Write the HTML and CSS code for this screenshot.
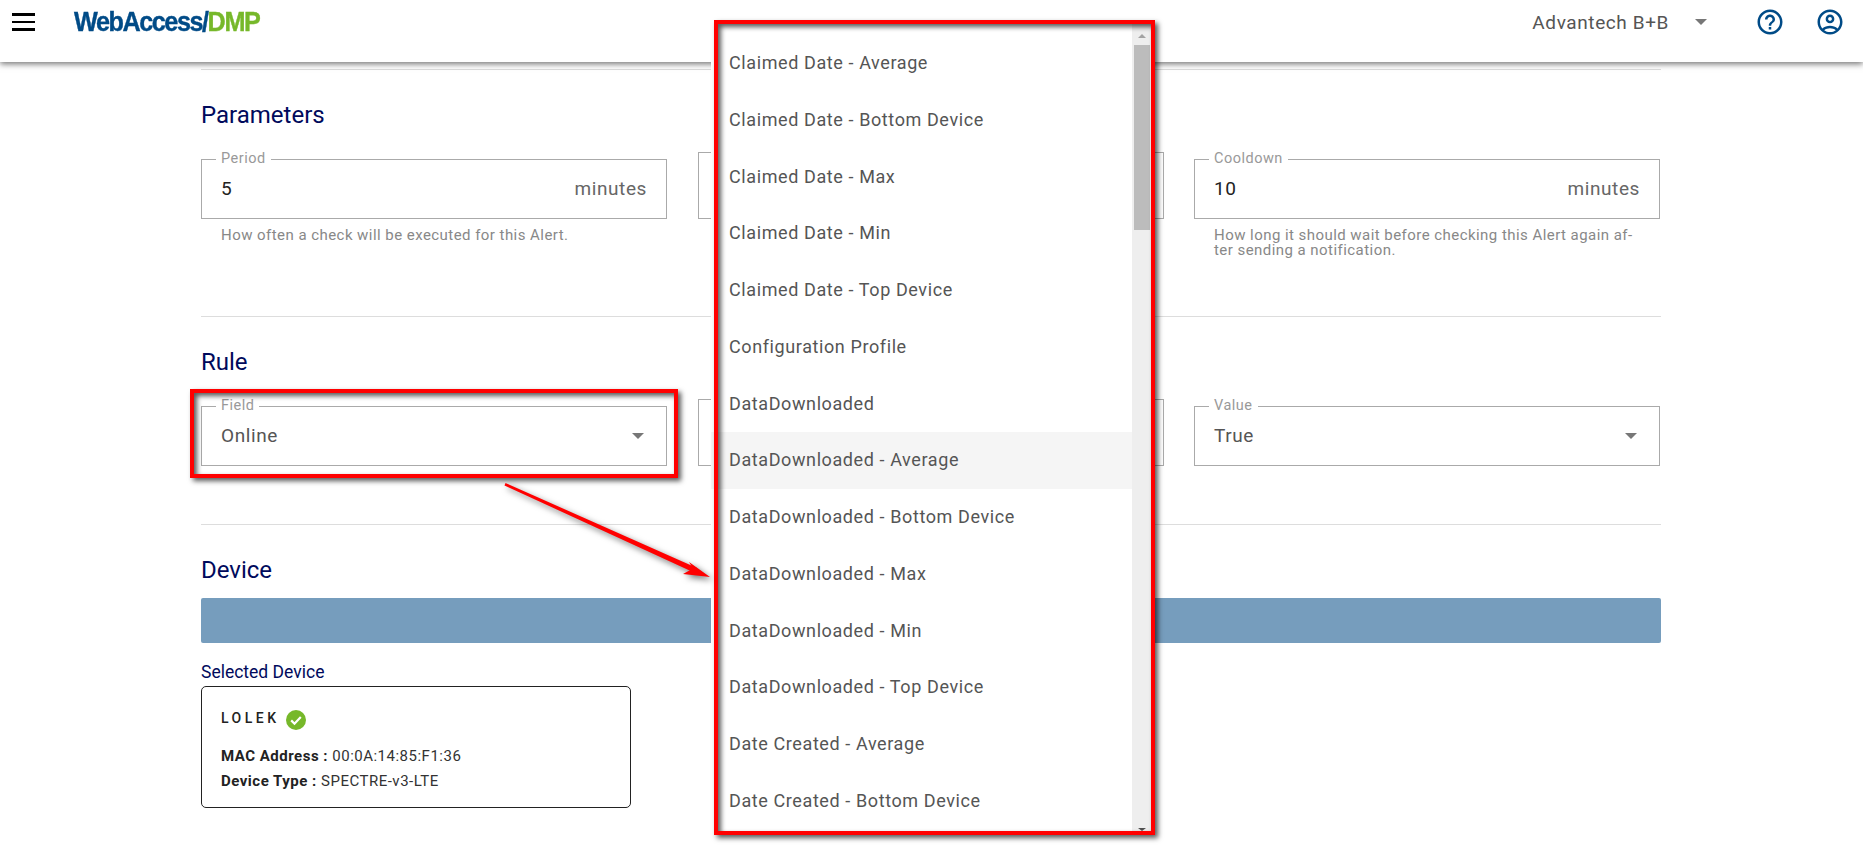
FILE: index.html
```html
<!DOCTYPE html>
<html lang="en">

<head>
	<meta charset="UTF-8">
	<title>WebAccess/DMP</title>
	<link rel="stylesheet" href="styles.css">
</head>

<body>
	<header class="topbar">
		<div class="burger"><span></span><span></span><span></span></div>
		<div class="logo">WebAccess/<span class="logo-dmp">DMP</span></div>
		<div class="org">Advantech B+B</div>
		<div class="caret org-caret"></div>
		<svg class="top-icon help-icon" viewBox="0 0 24 24"><path d="M11 18h2v-2h-2v2zm1-16C6.48 2 2 6.48 2 12s4.48 10 10 10 10-4.48 10-10S17.52 2 12 2zm0 18c-4.41 0-8-3.59-8-8s3.59-8 8-8 8 3.59 8 8-3.59 8-8 8zm0-14c-2.21 0-4 1.79-4 4h2c0-1.1.9-2 2-2s2 .9 2 2c0 2-3 1.75-3 5h2c0-2.25 3-2.5 3-5 0-2.21-1.79-4-4-4z"/></svg>
		<svg class="top-icon" viewBox="0 0 24 24"><path d="M12 2C6.48 2 2 6.48 2 12s4.48 10 10 10 10-4.48 10-10S17.52 2 12 2zM7.35 18.5C8.66 17.56 10.26 17 12 17s3.34.56 4.65 1.5c-1.31.94-2.91 1.5-4.65 1.5s-3.34-.56-4.65-1.5zm10.79-1.38C16.45 15.8 14.32 15 12 15s-4.45.8-6.14 2.12C4.7 15.73 4 13.95 4 12c0-4.42 3.58-8 8-8s8 3.58 8 8c0 1.95-.7 3.73-1.86 5.12zM12 6c-1.93 0-3.5 1.57-3.5 3.5S10.07 13 12 13s3.5-1.57 3.5-3.5S13.93 6 12 6zm0 5c-.83 0-1.5-.67-1.5-1.5S11.17 8 12 8s1.5.67 1.5 1.5S12.83 11 12 11z"/></svg>
	</header>

	<main class="content">
		<hr class="rule-line first-line">

		<h2 class="section-title">Parameters</h2>
		<div class="field-row params-row">
			<div>
				<fieldset class="field">
					<legend>Period</legend>
					<span class="value">5</span>
					<span class="unit">minutes</span>
				</fieldset>
				<p class="hint">How often a check will be executed for this Alert.</p>
			</div>
			<div>
				<fieldset class="field"></fieldset>
			</div>
			<div>
				<fieldset class="field">
					<legend>Cooldown</legend>
					<span class="value">10</span>
					<span class="unit">minutes</span>
				</fieldset>
				<p class="hint">How long it should wait before checking this Alert again af&shy;ter sending a notification.</p>
			</div>
		</div>

		<hr class="rule-line params-line">

		<h2 class="section-title rule-title">Rule</h2>
		<div class="field-row">
			<fieldset class="field">
				<legend>Field</legend>
				<span class="value select-value">Online</span>
				<span class="caret"></span>
			</fieldset>
			<fieldset class="field"></fieldset>
			<fieldset class="field">
				<legend>Value</legend>
				<span class="value select-value">True</span>
				<span class="caret"></span>
			</fieldset>
		</div>

		<hr class="rule-line rule-end-line">

		<h2 class="section-title device-title">Device</h2>
		<div class="device-bar"></div>

		<div class="selected-label">Selected Device</div>
		<div class="device-card">
			<div class="device-name">
				<span>LOLEK</span>
				<svg class="ok-icon" viewBox="0 0 20 20">
					<circle cx="10" cy="10" r="10" fill="#76b82a"/>
					<path d="M5.2 10.4l3.3 3.3 6.3-6.6" fill="none" stroke="#fff" stroke-width="2.2"/>
				</svg>
			</div>
			<div class="device-line first-device-line"><b>MAC Address :</b> 00:0A:14:85:F1:36</div>
			<div class="device-line"><b>Device Type :</b> SPECTRE-v3-LTE</div>
		</div>
	</main>

	<div class="menu">
		<ul class="menu-list">
			<li>Claimed Date - Average</li>
			<li>Claimed Date - Bottom Device</li>
			<li>Claimed Date - Max</li>
			<li>Claimed Date - Min</li>
			<li>Claimed Date - Top Device</li>
			<li>Configuration Profile</li>
			<li>DataDownloaded</li>
			<li class="hover">DataDownloaded - Average</li>
			<li>DataDownloaded - Bottom Device</li>
			<li>DataDownloaded - Max</li>
			<li>DataDownloaded - Min</li>
			<li>DataDownloaded - Top Device</li>
			<li>Date Created - Average</li>
			<li>Date Created - Bottom Device</li>
		</ul>
		<div class="menu-scroll">
			<div class="arrow-up"></div>
			<div class="thumb"></div>
			<div class="arrow-down"></div>
		</div>
	</div>

	<div class="red-frame field-frame"></div>
	<div class="red-frame menu-frame"></div>
	<svg class="red-arrow" viewBox="0 0 1863 858">
		<polygon points="505.5,483 504.5,485.5 695,573 697,568" fill="#f00"/>
		<polygon points="710,577 689,562 693,568.5 683,574" fill="#f00"/>
	</svg>
</body>

</html>
```

FILE: styles.css
```css
* {
	box-sizing: border-box;
}

html,
body {
	height: 858px;
	overflow: hidden;
}

body {
	margin: 0;
	background-color: #fff;
	font-family: Roboto, "Liberation Sans", sans-serif;
	color: #555;
}

/* top bar */
.topbar {
	position: relative;
	z-index: 1;
	display: flex;
	align-items: center;
	height: 62px;
	padding: 0 18px 18px 12px;
	background-color: #fff;
	box-shadow: 0 2px 6px rgba(0, 0, 0, 0.55);
}

.burger {
	display: flex;
	flex-direction: column;
	gap: 5px;
	width: 23px;
}

.burger span {
	display: block;
	height: 2.5px;
	background-color: #000;
}

.logo {
	width: 187px;
	margin-left: 39px;
	font-family: "Liberation Sans", Arial, sans-serif;
	font-size: 28px;
	font-weight: bold;
	line-height: 28px;
	white-space: nowrap;
	letter-spacing: -1.6px;
	color: #004b87;
	-webkit-text-stroke: 0.4px;
	transform: scaleX(0.9);
	transform-origin: left center;
}

.logo-dmp {
	color: #76b82a;
}

.org {
	margin-left: auto;
	font-size: 19px;
	letter-spacing: 0.6px;
	color: #555;
}

.caret {
	flex: none;
	width: 0;
	height: 0;
	border-left: 6px solid transparent;
	border-right: 6px solid transparent;
	border-top: 6px solid #777;
}

.org-caret {
	margin: 0 48px 0 26px;
}

.top-icon {
	width: 30px;
	height: 30px;
	fill: #004b87;
}

.help-icon {
	margin-right: 30px;
}

/* page */
.content {
	width: 1460px;
	margin-left: 201px;
}

.rule-line {
	height: 1px;
	margin: 0;
	border: 0;
	background-color: #ddd;
}

.first-line {
	margin-top: 7px;
}

.params-line {
	margin-top: 61px;
}

.rule-end-line {
	margin-top: 58px;
}

.section-title {
	margin: 31px 0 23px;
	font-size: 24px;
	font-weight: 400;
	line-height: 28px;
	color: #000a5c;
}

.rule-title {
	margin: 31px 0 23px;
}

.device-title {
	margin: 31px 0 14px;
}

.field-row {
	display: grid;
	grid-template-columns: repeat(3, 466px);
	gap: 30.5px;
}

.params-row {
	height: 103px;
}

.field {
	display: flex;
	align-items: center;
	height: 67px;
	min-width: 0;
	margin: 0;
	padding: 0 19px 7px 19px;
	border: 1px solid #aaa;
}

.field legend {
	margin-left: -5px;
	padding: 0 5px;
	font-size: 14.5px;
	line-height: 14px;
	letter-spacing: 0.5px;
	color: #999;
}

.value {
	font-size: 19px;
	letter-spacing: 0.6px;
	color: #222;
}

.select-value {
	color: #555;
}

.unit {
	margin-left: auto;
	font-size: 19px;
	letter-spacing: 0.6px;
	color: #666;
}

.field .caret {
	margin: 0 3px 0 auto;
}

.hint {
	margin: 9px 0 0;
	padding: 0 20px;
	font-size: 15px;
	line-height: 15px;
	letter-spacing: 0.45px;
	color: #888;
}

.device-bar {
	height: 45px;
	border-radius: 2px;
	background-color: #769dbd;
}

.selected-label {
	margin-top: 19px;
	font-size: 17.5px;
	line-height: 20px;
	color: #000a5c;
}

.device-card {
	width: 430px;
	height: 122px;
	margin-top: 4px;
	padding: 21px 19px;
	border: 1px solid #222;
	border-radius: 5px;
	font-size: 15px;
	letter-spacing: 0.5px;
	color: #333;
}

.device-name {
	display: flex;
	align-items: center;
	gap: 6px;
	height: 20px;
	font-weight: 500;
	font-size: 14px;
	letter-spacing: 3.5px;
	color: #222;
}

.ok-icon {
	width: 20px;
	height: 20px;
	margin-top: 4px;
}

.device-line {
	line-height: 25px;
}

.first-device-line {
	margin-top: 16px;
}

.device-line b {
	font-weight: 700;
	color: #222;
}

/* open dropdown */
.menu {
	position: absolute;
	z-index: 2;
	left: 711px;
	top: 24px;
	display: flex;
	width: 440px;
	height: 807px;
	background-color: #fff;
}

.menu-list {
	flex: 1;
	margin: 0;
	padding: 11px 0 0;
	overflow: hidden;
	list-style: none;
}

.menu-list li {
	height: 56.75px;
	padding-left: 18px;
	font-size: 18px;
	line-height: 56.75px;
	letter-spacing: 0.6px;
	color: #555;
}

.menu-list .hover {
	background-color: #f5f5f5;
}

.menu-scroll {
	display: flex;
	flex-direction: column;
	align-items: center;
	width: 19px;
	background-color: #eee;
}

.arrow-up {
	width: 0;
	height: 0;
	margin-top: 10px;
	border-left: 4px solid transparent;
	border-right: 4px solid transparent;
	border-bottom: 4px solid #a3a3a3;
}

.thumb {
	width: 16px;
	height: 185px;
	margin-top: 7px;
	background-color: #bcbcbc;
}

.arrow-down {
	width: 0;
	height: 0;
	margin-top: auto;
	border-left: 4px solid transparent;
	border-right: 4px solid transparent;
	border-top: 3px solid #505050;
}

/* red annotations */
.red-frame {
	position: absolute;
	z-index: 3;
	border: 4px solid #f00;
	box-shadow: 3px 3px 5px rgba(0, 0, 0, 0.65), inset 3px 3px 5px rgba(0, 0, 0, 0.65);
}

.field-frame {
	left: 190px;
	top: 389px;
	width: 488px;
	height: 89px;
}

.menu-frame {
	left: 714px;
	top: 20px;
	width: 441px;
	height: 815px;
}

.red-arrow {
	position: absolute;
	z-index: 3;
	left: 0;
	top: 0;
	width: 1863px;
	height: 858px;
	filter: drop-shadow(3px 3px 3px rgba(0, 0, 0, 0.55));
}
```
